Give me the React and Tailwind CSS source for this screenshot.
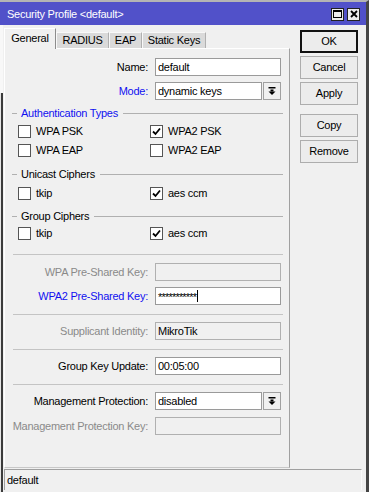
import React from 'react';

const blue = 'text-[#1010f0]';
const grey = 'text-[#8a8a8a]';

function Check() {
  return (
    <svg width="9" height="9" viewBox="0 0 9 9" className="block">
      <path d="M1 4.5 L3.5 7 L8 1.5" fill="none" stroke="#000" strokeWidth="1.8" />
    </svg>
  );
}

function CheckBox({ label, checked }) {
  return (
    <div className="flex items-center gap-[5px]">
      <div className="w-[13px] h-[13px] border border-[#555] bg-white flex items-center justify-center">
        {checked && <Check />}
      </div>
      <span>{label}</span>
    </div>
  );
}

function CheckRow({ a, b, checkedA, checkedB, className = '' }) {
  return (
    <div className={`flex items-center h-[14px] pl-[13px] ${className}`}>
      <div className="w-[132px]"><CheckBox label={a} checked={checkedA} /></div>
      <CheckBox label={b} checked={checkedB} />
    </div>
  );
}

function GroupHead({ title, color = '', className = '' }) {
  return (
    <div className={`flex items-center h-[14px] pl-[7px] pr-[6px] ${className}`}>
      <div className="w-[5px] h-px bg-[#b0b0b0]" />
      <span className={`ml-[4px] mr-[5px] ${color}`}>{title}</span>
      <div className="flex-1 h-px bg-[#b0b0b0]" />
    </div>
  );
}

function Sep({ className = '' }) {
  return <div className={`h-px bg-[#c4c4c4] ml-[8px] mr-[6px] ${className}`} />;
}

function Field({ label, labelColor = '', value, disabled, className = '', children }) {
  return (
    <div className={`flex items-center h-[18px] ${className}`}>
      <div className={`w-[143px] text-right whitespace-nowrap ${labelColor}`}>{label}</div>
      {children ? (
        <div className="ml-[7px]">{children}</div>
      ) : (
        <div
          className={`ml-[7px] w-[126px] h-[18px] border flex items-center pl-[2px] ${
            disabled ? 'bg-[#f0f0f0] border-[#b0b0b0]' : 'bg-white border-[#9a9a9a]'
          }`}
        >
          {value}
        </div>
      )}
    </div>
  );
}

function DropArrow() {
  return (
    <svg width="8" height="8" viewBox="0 0 8 8" className="block">
      <rect x="0.5" y="0" width="7" height="1.5" fill="#000" />
      <rect x="2.5" y="2.5" width="3" height="2" fill="#000" />
      <polygon points="0.5,4.5 7.5,4.5 4,8" fill="#000" />
    </svg>
  );
}

function Combo({ value }) {
  return (
    <div className="flex gap-px">
      <div className="w-[107px] h-[18px] bg-white border border-[#9a9a9a] flex items-center pl-[2px]">{value}</div>
      <div className="w-[18px] h-[18px] border border-[#a0a0a0] bg-[#f0f0f0] flex items-center justify-center">
        <DropArrow />
      </div>
    </div>
  );
}

function Btn({ children, primary, className = '' }) {
  return (
    <div
      className={`w-[58px] h-[23px] flex items-center justify-center bg-[#ececec] ${
        primary ? 'border-2 border-[#111]' : 'border border-[#adadad]'
      } ${className}`}
    >
      {children}
    </div>
  );
}

export default function App() {
  const tabs = [
    { name: 'RADIUS', w: 'w-[53px]' },
    { name: 'EAP', w: 'w-[33px]' },
    { name: 'Static Keys', w: 'w-[64px]' },
  ];

  return (
    <div className="w-[369px] h-[492px] bg-[#f0f0f0] border-t-2 border-t-[#b4b4b4] border-r-[3px] border-r-[#454545] flex flex-col overflow-hidden text-[11px] tracking-[-0.25px] text-black font-['Liberation_Sans',Arial,sans-serif] leading-none">
      {/* title bar */}
      <div className="h-[23px] bg-[#5151c9] flex items-center pl-[7px] pr-[6px] text-white">
        <span className="mt-[2px] text-[11px]">Security Profile &lt;default&gt;</span>
        <div className="ml-auto flex gap-[3px] mt-[1px]">
          <div className="w-[13px] h-[13px] bg-[#ececec] border border-[#222] flex items-center justify-center">
            <svg width="9" height="8" viewBox="0 0 9 8" className="block">
              <rect x="0.5" y="0.5" width="8" height="7" fill="none" stroke="#000" />
              <rect x="0" y="0" width="9" height="2" fill="#000" />
            </svg>
          </div>
          <div className="w-[13px] h-[13px] bg-[#ececec] border border-[#222] flex items-center justify-center">
            <svg width="8" height="8" viewBox="0 0 8 8" className="block">
              <path d="M1 1 L7 7 M7 1 L1 7" stroke="#000" strokeWidth="1.8" />
            </svg>
          </div>
        </div>
      </div>

      <div className="flex-1 flex">
        {/* left window edge */}
        <div className="w-[3px] flex flex-col">
          <div className="h-[68px] bg-[#f8f8f8]" />
          <div className="flex-1 flex">
            <div className="w-px bg-[#e6e6e6]" />
            <div className="w-[2px] bg-[#3c3c3c]" />
          </div>
        </div>

        <div className="flex-1 flex flex-col">
          <div className="h-[443px] flex">
            {/* tabs + panel */}
            <div className="w-[287px] pl-px flex flex-col">
              <div className="h-[23px] flex items-end">
                <div className="relative z-10 -mb-px w-[52px] h-[21px] bg-[#f0f0f0] border-l border-t border-white border-r border-r-[#8c8c8c] flex items-center justify-center pb-[2px]">
                  General
                </div>
                {tabs.map((t) => (
                  <div
                    key={t.name}
                    className={`${t.w} h-[16px] bg-[#dadada] border-l border-t border-[#f8f8f8] border-r border-r-[#b0b0b0] flex items-center justify-center`}
                  >
                    {t.name}
                  </div>
                ))}
              </div>

              <div className="h-[420px] border-t border-l border-white border-r border-b border-r-[#a0a0a0] border-b-[#c8c8c8] flex flex-col">
                <Field label="Name:" value="default" className="mt-[9px]" />
                <Field label="Mode:" labelColor={blue} className="mt-[6px]">
                  <Combo value="dynamic keys" />
                </Field>

                <GroupHead title="Authentication Types" color={blue} className="mt-[6px]" />
                <CheckRow a="WPA PSK" b="WPA2 PSK" checkedB className="mt-[4px]" />
                <CheckRow a="WPA EAP" b="WPA2 EAP" className="mt-[5px]" />

                <GroupHead title="Unicast Ciphers" className="mt-[10px]" />
                <CheckRow a="tkip" b="aes ccm" checkedB className="mt-[5px]" />

                <GroupHead title="Group Ciphers" className="mt-[9px]" />
                <CheckRow a="tkip" b="aes ccm" checkedB className="mt-[3px]" />

                <Sep className="mt-[14px]" />
                <Field label="WPA Pre-Shared Key:" labelColor={grey} disabled value="" className="mt-[8px]" />
                <Field label="WPA2 Pre-Shared Key:" labelColor={blue} className="mt-[6px]">
                  <div className="w-[126px] h-[18px] bg-white border border-[#9a9a9a] flex items-center pl-[2px]">
                    <span className="tracking-[-0.8px] text-[11px] mt-[3px]">***********</span>
                    <span className="ml-[1px] w-px h-[12px] bg-black" />
                  </div>
                </Field>

                <Sep className="mt-[9px]" />
                <Field label="Supplicant Identity:" labelColor={grey} disabled value="MikroTik" className="mt-[7px]" />

                <Sep className="mt-[9px]" />
                <Field label="Group Key Update:" value="00:05:00" className="mt-[7px]" />

                <Sep className="mt-[9px]" />
                <Field label="Management Protection:" className="mt-[7px]">
                  <Combo value="disabled" />
                </Field>
                <Field label="Management Protection Key:" labelColor={grey} disabled value="" className="mt-[7px]" />
              </div>
            </div>

            {/* buttons */}
            <div className="ml-[10px] pt-[5px] flex flex-col">
              <Btn primary>OK</Btn>
              <Btn className="mt-[3px]">Cancel</Btn>
              <Btn className="mt-[3px]">Apply</Btn>
              <Btn className="mt-[9px]">Copy</Btn>
              <Btn className="mt-[3px]">Remove</Btn>
            </div>
          </div>

          {/* status bar */}
          <div className="mt-px ml-px w-[358px] h-[21px] border-t border-l border-[#a0a0a0] border-r border-r-[#fafafa] flex items-center pl-[2px]">
            default
          </div>
        </div>
      </div>
    </div>
  );
}
